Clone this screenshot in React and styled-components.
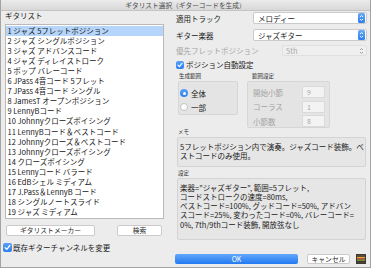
import React from "react";
import styled, { createGlobalStyle } from "styled-components";

const GlobalStyle = createGlobalStyle`
  html, body {
    margin: 0;
    padding: 0;
    background: #ececec;
  }
  body {
    font-family: "Noto Sans CJK JP", "Noto Sans", sans-serif;
    color: #1e1e1e;
  }
`;

const guitarists = [
  "1 ジャズ 5フレットポジション",
  "2 ジャズ シングルポジション",
  "3 ジャズ アドバンスコード",
  "4 ジャズ ディレイストローク",
  "5 ポップ バレーコード",
  "6 JPass 4音コード 5フレット",
  "7 JPass 4音コード シングル",
  "8 JamesT オープンポジション",
  "9 LennyBコード",
  "10 Johnnyクローズボイシング",
  "11 LennyBコード＆ベストコード",
  "12 Johnnyクローズ＆ベストコード",
  "13 Johnnyクローズボイシング",
  "14 クローズボイシング",
  "15 Lennyコード バラード",
  "16 EdBシェル ミディアム",
  "17 J.Pass＆LennyB コード",
  "18 シングルノートスライド",
  "19 ジャズ ミディアム",
];

const Stepper = () => (
  <svg width="7" height="10" viewBox="0 0 7 10">
    <defs>
      <linearGradient id="stp" x1="0" y1="0" x2="0" y2="1">
        <stop offset="0" stopColor="#6aaaf8" />
        <stop offset="1" stopColor="#2b7ff0" />
      </linearGradient>
    </defs>
    <rect x="0" y="0" width="7" height="10" rx="1.5" fill="url(#stp)" />
    <path d="M2 4 L3.5 2.5 L5 4 M2 6 L3.5 7.5 L5 6" stroke="#fff" strokeWidth="0.9" fill="none" />
  </svg>
);

const GrayStepper = () => (
  <svg width="7" height="10" viewBox="0 0 7 10">
    <path d="M2 4 L3.5 2.5 L5 4 M2 6 L3.5 7.5 L5 6" stroke="#9a9a9a" strokeWidth="0.9" fill="none" />
  </svg>
);

const Check = () => (
  <svg width="100%" height="100%" viewBox="0 0 10 10">
    <path d="M2.4 5.2 L4.2 7 L7.6 2.8" stroke="#fff" strokeWidth="1.4" fill="none" strokeLinecap="round" strokeLinejoin="round" />
  </svg>
);

const AppIcon = () => (
  <svg width="10" height="10" viewBox="0 0 10 10">
    <rect x="0" y="0" width="10" height="10" fill="#3b3a36" />
    <rect x="1" y="1" width="8" height="8" fill="#5b4a35" />
    <rect x="1" y="3" width="8" height="1.4" fill="#e7a43b" />
    <rect x="1" y="4.4" width="8" height="1.2" fill="#c9462d" />
    <rect x="1" y="5.6" width="8" height="1.3" fill="#6f9a3e" />
    <rect x="1" y="7.4" width="8" height="0.8" fill="#2a2a2a" />
  </svg>
);

const Window = styled.div`
  width: 371px;
  height: 268px;
  box-sizing: border-box;
  border: 1px solid #a3a3a3;
  border-top: none;
  background: #ececec;
  display: flex;
  flex-direction: column;
  overflow: hidden;
`;

const TitleBar = styled.div`
  height: 11px;
  box-sizing: border-box;
  border-bottom: 1px solid #c4c4c4;
  background: linear-gradient(#ebebeb, #d8d8d8);
  font-size: 6.7px;
  line-height: 10px;
  color: #4a4a4a;
  text-align: center;
`;

const Body = styled.div`
  display: grid;
  grid-template-columns: 159px 191px;
  column-gap: 12px;
  padding: 0 0 0 4px;
`;

const Column = styled.div`
  display: flex;
  flex-direction: column;
`;

const SectionLabel = styled.div`
  font-size: 7.5px;
  line-height: 10px;
  height: 10px;
  color: #1a1a1a;
`;

const List = styled.div`
  margin-top: 3px;
  height: 195px;
  box-sizing: border-box;
  border: 1px solid #b9b9b9;
  background: #fff;
  padding-top: 0.6px;
`;

const ListRow = styled.div`
  height: 10.1px;
  line-height: 10.1px;
  font-size: 7.5px;
  padding-left: 1.5px;
  white-space: nowrap;
  color: #161616;
  background: ${(p) => (p.$selected ? "#b6d5fa" : "transparent")};
`;

const ButtonRow = styled.div`
  display: flex;
  justify-content: space-between;
  margin: 6px 2px 0 1px;
`;

const PlainButton = styled.div`
  width: ${(p) => p.$w}px;
  height: 11px;
  box-sizing: border-box;
  border: 1px solid #cbcbcb;
  border-radius: 2px;
  background: #fff;
  font-size: 6.8px;
  line-height: 9px;
  text-align: center;
  color: #2a2a2a;
`;

const CheckRow = styled.div`
  display: flex;
  align-items: center;
  gap: ${(p) => p.$gap || 2}px;
  height: ${(p) => p.$h || 9}px;
  margin-top: ${(p) => p.$mt || 0}px;
  margin-left: ${(p) => p.$ml || 0}px;
  font-size: 7.5px;
  color: #1a1a1a;
  white-space: nowrap;
`;

const CheckBox = styled.div`
  width: ${(p) => p.$size}px;
  height: ${(p) => p.$size}px;
  border-radius: 2px;
  background: linear-gradient(#5aa1f8, #2a7ff0);
  flex-shrink: 0;
  display: flex;
`;

const FieldRow = styled.div`
  display: flex;
  align-items: center;
  justify-content: space-between;
  height: ${(p) => p.$h}px;
  margin-top: ${(p) => p.$mt}px;
  font-size: 7.5px;
  white-space: nowrap;
  color: ${(p) => (p.$disabled ? "#a6a6a6" : "#1a1a1a")};
`;

const Select = styled.div`
  width: ${(p) => p.$w}px;
  height: 100%;
  box-sizing: border-box;
  display: flex;
  align-items: center;
  justify-content: space-between;
  padding: 0 1px 0 ${(p) => (p.$disabled ? 3 : 4)}px;
  border: 1px solid ${(p) => (p.$disabled ? "#e0e0e0" : "#cacaca")};
  border-radius: 2px;
  background: ${(p) => (p.$disabled ? "#efefef" : "#fff")};
  color: ${(p) => (p.$disabled ? "#a8a8a8" : "#1a1a1a")};
  font-size: 7.5px;
`;

const Groups = styled.div`
  display: flex;
  align-items: flex-start;
  gap: 9px;
  margin: 4px 0 0 2px;
`;

const Group = styled.div`
  display: flex;
  flex-direction: column;
`;

const SmallLabel = styled.div`
  font-size: 5.5px;
  line-height: 7px;
  height: 7px;
  color: #2e2e2e;
  padding-left: ${(p) => p.$pl || 1}px;
  margin-top: ${(p) => p.$mt || 0}px;
`;

const GroupBox = styled.div`
  width: ${(p) => p.$w}px;
  height: ${(p) => p.$h}px;
  margin-top: 1px;
  box-sizing: border-box;
  border: 1px solid #d6d6d6;
  border-radius: 2px;
  background: #e4e4e4;
  display: flex;
  flex-direction: column;
  padding: ${(p) => p.$pad};
  gap: ${(p) => p.$gap}px;
`;

const RadioRow = styled.div`
  display: flex;
  align-items: center;
  gap: 3px;
  height: 10px;
  font-size: 7.5px;
  color: #1a1a1a;
`;

const Radio = styled.div`
  width: 8px;
  height: 8px;
  box-sizing: border-box;
  border-radius: 50%;
  flex-shrink: 0;
  display: flex;
  align-items: center;
  justify-content: center;
  background: ${(p) => (p.$on ? "linear-gradient(#5aa1f8, #2a7ff0)" : "#fff")};
  border: ${(p) => (p.$on ? "none" : "1px solid #c2c2c2")};
  &::after {
    content: "";
    width: 3px;
    height: 3px;
    border-radius: 50%;
    background: ${(p) => (p.$on ? "#fff" : "transparent")};
  }
`;

const RangeRow = styled.div`
  display: flex;
  align-items: center;
  justify-content: space-between;
  height: 12px;
  font-size: 7.5px;
  color: #a3a3a3;
`;

const NumField = styled.div`
  width: 23px;
  height: 12px;
  box-sizing: border-box;
  border: 1px solid #dadada;
  background: #f3f3f3;
  color: #a8a8a8;
  font-size: 7px;
  line-height: 10px;
  padding-left: 4px;
`;

const TextBox = styled.div`
  height: ${(p) => p.$h}px;
  margin: 1.5px 0 0 1px;
  width: 189px;
  box-sizing: border-box;
  border: 1px solid #d3d3d3;
  border-radius: 2px;
  background: #e6e6e6;
  padding: ${(p) => p.$pt}px 0 0 2px;
  font-size: 7.5px;
  line-height: ${(p) => p.$lh}px;
  color: #1a1a1a;
  white-space: nowrap;
`;

const Footer = styled.div`
  display: flex;
  align-items: center;
  margin: 13px 0 0 -1px;
  height: 11px;
`;

const OkButton = styled.div`
  width: 123px;
  height: 10px;
  border-radius: 2px;
  background: linear-gradient(#62a8fa, #2279f1);
  color: #fff;
  font-size: 7px;
  line-height: 10px;
  text-align: center;
`;

const CancelButton = styled(PlainButton)`
  margin-left: 9px;
  height: 10px;
  line-height: 8px;
`;

const IconSlot = styled.div`
  margin-left: 6px;
  width: 10px;
  height: 10px;
  display: flex;
`;

export default function App() {
  return (
    <>
      <GlobalStyle />
      <Window>
        <TitleBar>ギタリスト選択（ギターコードを生成）</TitleBar>
        <Body>
          <Column>
            <SectionLabel>ギタリスト</SectionLabel>
            <List>
              {guitarists.map((g, i) => (
                <ListRow key={g} $selected={i === 0}>
                  {g}
                </ListRow>
              ))}
            </List>
            <ButtonRow>
              <PlainButton $w={89}>ギタリストメーカー</PlainButton>
              <PlainButton $w={45}>検索</PlainButton>
            </ButtonRow>
            <CheckRow $mt={6} $ml={-2} $h={10} $gap={1}>
              <CheckBox $size={9}>
                <Check />
              </CheckBox>
              既存ギターチャンネルを変更
            </CheckRow>
          </Column>

          <Column>
            <FieldRow $h={12} $mt={1}>
              適用トラック
              <Select $w={114}>
                <span>メロディー</span>
                <Stepper />
              </Select>
            </FieldRow>
            <FieldRow $h={12} $mt={5}>
              ギター楽器
              <Select $w={114}>
                <span>ジャズギター</span>
                <Stepper />
              </Select>
            </FieldRow>
            <FieldRow $h={11} $mt={4} $disabled>
              優先フレットポジション
              <Select $w={85} $disabled>
                <span>5th</span>
                <GrayStepper />
              </Select>
            </FieldRow>
            <CheckRow $mt={4} $h={9} $gap={2}>
              <CheckBox $size={8}>
                <Check />
              </CheckBox>
              ポジション自動設定
            </CheckRow>

            <Groups>
              <Group>
                <SmallLabel>生成範囲</SmallLabel>
                <GroupBox $w={60} $h={34} $pad="6px 0 0 1px" $gap={4}>
                  <RadioRow>
                    <Radio $on />
                    全体
                  </RadioRow>
                  <RadioRow>
                    <Radio />
                    一部
                  </RadioRow>
                </GroupBox>
              </Group>
              <Group>
                <SmallLabel $pl={5}>範囲設定</SmallLabel>
                <GroupBox $w={83} $h={47} $pad="4px 4px 0 5px" $gap={2.5}>
                  <RangeRow>
                    開始小節
                    <NumField>9</NumField>
                  </RangeRow>
                  <RangeRow>
                    コーラス
                    <NumField>1</NumField>
                  </RangeRow>
                  <RangeRow>
                    小節数
                    <NumField>8</NumField>
                  </RangeRow>
                </GroupBox>
              </Group>
            </Groups>

            <SmallLabel $pl={2} $mt={0.5}>メモ</SmallLabel>
            <TextBox $h={30} $pt={4} $lh={9}>
              5フレットポジション内で演奏。ジャズコード装飾。ベ
              <br />
              ストコードのみ使用。
            </TextBox>

            <SmallLabel $pl={2} $mt={2.5}>設定</SmallLabel>
            <TextBox $h={62} $pt={3.5} $lh={9.3}>
              楽器="ジャズギター", 範囲=5フレット,
              <br />
              コードストロークの速度=80ms,
              <br />
              ベストコード=100%, グッドコード=50%, アドバン
              <br />
              スコード=25%, 変わったコード=0%, バレーコード=
              <br />
              0%, 7th/9thコード装飾, 開放弦なし
            </TextBox>

            <Footer>
              <OkButton>OK</OkButton>
              <CancelButton $w={43}>キャンセル</CancelButton>
              <IconSlot>
                <AppIcon />
              </IconSlot>
            </Footer>
          </Column>
        </Body>
      </Window>
    </>
  );
}
